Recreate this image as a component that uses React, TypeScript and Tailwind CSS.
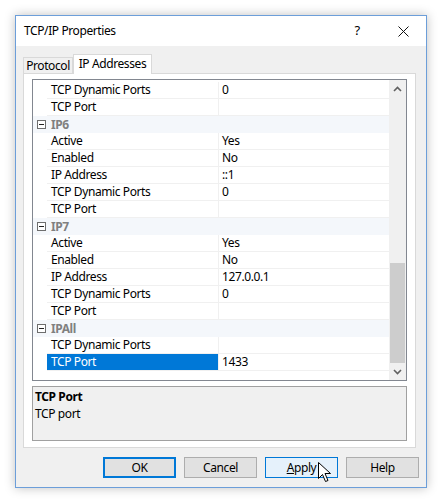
import React from "react";

type Row =
  | { kind: "cat"; label: string }
  | { kind: "prop"; label: string; value?: string; selected?: boolean };

const rows: Row[] = [
  { kind: "prop", label: "TCP Dynamic Ports", value: "0" },
  { kind: "prop", label: "TCP Port" },
  { kind: "cat", label: "IP6" },
  { kind: "prop", label: "Active", value: "Yes" },
  { kind: "prop", label: "Enabled", value: "No" },
  { kind: "prop", label: "IP Address", value: "::1" },
  { kind: "prop", label: "TCP Dynamic Ports", value: "0" },
  { kind: "prop", label: "TCP Port" },
  { kind: "cat", label: "IP7" },
  { kind: "prop", label: "Active", value: "Yes" },
  { kind: "prop", label: "Enabled", value: "No" },
  { kind: "prop", label: "IP Address", value: "127.0.0.1" },
  { kind: "prop", label: "TCP Dynamic Ports", value: "0" },
  { kind: "prop", label: "TCP Port" },
  { kind: "cat", label: "IPAll" },
  { kind: "prop", label: "TCP Dynamic Ports" },
  { kind: "prop", label: "TCP Port", value: "1433", selected: true },
];

const font = { fontFamily: '"Segoe UI", "Noto Sans", Arial, sans-serif' };

function MinusBox() {
  return (
    <svg width="9" height="9" viewBox="0 0 9 9">
      <rect x="0.5" y="0.5" width="8" height="8" fill="#fff" stroke="#6e6e6e" />
      <path d="M2 4.5H7" stroke="#222" strokeWidth="1" />
    </svg>
  );
}

function GridRow({ row }: { row: Row }) {
  if (row.kind === "cat") {
    return (
      <div className="flex h-[17px] bg-[#f4f7fb]">
        <div className="w-[14px] shrink-0 flex items-center justify-end pr-[1px]">
          <MinusBox />
        </div>
        <div className="pl-[4px] text-[12px] leading-[17px] font-bold text-[#808080]">{row.label}</div>
      </div>
    );
  }
  return (
    <div className="flex h-[17px]">
      <div className="w-[14px] shrink-0" />
      <div
        className={`w-[171px] shrink-0 pl-[4px] text-[12px] leading-[16px] border-b border-[#f0f0f0] ${
          row.selected ? "bg-[#0078d7] text-white" : "text-black"
        }`}
      >
        {row.label}
      </div>
      <div className="flex-1 pl-[3px] text-[12px] leading-[16px] text-black border-l border-b border-[#f0f0f0]">
        {row.value}
      </div>
    </div>
  );
}

function Btn({ label, variant }: { label: React.ReactNode; variant: "default" | "normal" | "hover" }) {
  const cls =
    variant === "default"
      ? "border-2 border-[#0078d7] bg-[#e1e1e1]"
      : variant === "hover"
      ? "border border-[#0078d7] bg-[#e5f1fb]"
      : "border border-[#adadad] bg-[#e1e1e1]";
  return (
    <div className={`w-[73px] h-[21px] flex items-center justify-center text-[12px] text-black ${cls}`}>{label}</div>
  );
}

export default function App() {
  return (
    <div className="w-[442px] h-[503px] bg-white overflow-hidden relative tracking-[-0.4px]" style={font}>
      <div className="ml-[15px] mt-[15px] w-[412px] h-[473px] border border-[#6c9ed9] bg-[#f0f0f0] shadow-[0_0_10px_rgba(0,0,0,0.25)] flex flex-col">
        {/* title bar */}
        <div className="h-[30px] bg-white flex items-center shrink-0">
          <div className="pl-[8px] text-[12px] text-black flex-1">TCP/IP Properties</div>
          <div className="w-[46px] text-center text-[13px] text-black">?</div>
          <div className="w-[46px] flex justify-center">
            <svg width="11" height="11" viewBox="0 0 11 11">
              <path d="M0.5 0.5L10.5 10.5M10.5 0.5L0.5 10.5" stroke="#111" strokeWidth="1" />
            </svg>
          </div>
        </div>

        {/* tabs */}
        <div className="mt-[7px] ml-[7px] flex items-end h-[20px]">
          <div className="h-[16px] w-[50px] border border-b-0 border-[#d9d9d9] bg-[#f0f0f0] text-[12px] leading-[16px] text-center text-black">
            Protocol
          </div>
          <div className="h-[20px] w-[79px] border border-b-0 border-[#d9d9d9] bg-white text-[12px] leading-[17px] text-center text-black relative top-[1px] z-10">
            IP Addresses
          </div>
        </div>

        {/* tab panel */}
        <div className="ml-[7px] w-[393px] h-[375px] border border-[#d9d9d9] bg-white px-[8px] pt-[5px]">
          {/* property grid */}
          <div className="w-[375px] h-[302px] border border-[#828790] bg-white flex">
            <div className="flex-1 pt-[2px] overflow-hidden">
              {rows.map((r, i) => (
                <GridRow key={i} row={r} />
              ))}
            </div>
            <div className="w-[17px] shrink-0 bg-[#f0f0f0] flex flex-col">
              <div className="h-[17px] flex items-center justify-center">
                <svg width="9" height="6" viewBox="0 0 9 6">
                  <path d="M1 5L4.5 1.5L8 5" stroke="#606060" strokeWidth="1.6" fill="none" />
                </svg>
              </div>
              <div className="flex-1 flex flex-col px-[1px]">
                <div className="h-[166px]" />
                <div className="h-[100px] bg-[#cdcdcd]" />
              </div>
              <div className="h-[17px] flex items-center justify-center">
                <svg width="9" height="6" viewBox="0 0 9 6">
                  <path d="M1 1L4.5 4.5L8 1" stroke="#606060" strokeWidth="1.6" fill="none" />
                </svg>
              </div>
            </div>
          </div>

          {/* description */}
          <div className="mt-[5px] w-[375px] h-[55px] border border-[#a0a0a0] bg-[#f0f0f0] px-[2px] pt-[1px]">
            <div className="text-[12px] leading-[17px] font-bold text-black">TCP Port</div>
            <div className="text-[12px] leading-[17px] text-black">TCP port</div>
          </div>
        </div>

        {/* buttons */}
        <div className="mt-[9px] flex gap-[8px] pl-[87px]">
          <Btn label="OK" variant="default" />
          <Btn label="Cancel" variant="normal" />
          <Btn
            label={
              <span>
                <span className="underline">A</span>pply
              </span>
            }
            variant="hover"
          />
          <Btn label="Help" variant="normal" />
        </div>
      </div>

      {/* mouse cursor */}
      <svg className="absolute left-[318px] top-[462px]" width="13" height="20" viewBox="0 0 13 20">
        <path
          d="M0.5 0.5V16.5L4.5 12.5L7.5 19.5L10 18.5L7 11.5H12.5Z"
          fill="#fff"
          stroke="#000"
          strokeWidth="1"
          strokeLinejoin="miter"
        />
      </svg>
    </div>
  );
}
